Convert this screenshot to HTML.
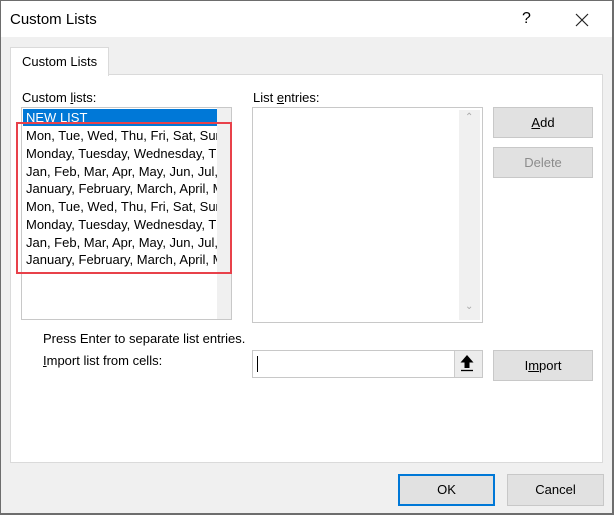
<!DOCTYPE html>
<html><head><meta charset="utf-8"><style>
*{margin:0;padding:0;box-sizing:border-box}
body{width:614px;height:515px;overflow:hidden;background:#6d6d6d;font-family:"Liberation Sans",sans-serif;font-size:13px;color:#000}
.win{position:absolute;left:1px;top:1px;width:611px;height:512px;background:#f0f0f0}
.title{position:absolute;left:0;top:0;width:611px;height:36px;background:#fff}
.abs{position:absolute;white-space:nowrap}
.panel{position:absolute;left:9px;top:73px;width:593px;height:389px;background:#fff;border:1px solid #dadada}
.tab{position:absolute;left:9px;top:46px;width:99px;height:29px;background:#fff;border:1px solid #dadada;border-bottom:none}
.box{position:absolute;background:#fff;border:1px solid #c8c8c8}
.btn{position:absolute;background:#e1e1e1;border:1px solid #c8c8c8;text-align:center;line-height:29px;font-size:13px}
.item{position:absolute;left:25px;font-size:13px;white-space:nowrap;width:191px;overflow:hidden}
</style></head><body>
<div class="win">
<div class="title"></div>
<div class="abs" style="left:9px;top:10px;font-size:15px">Custom Lists</div>
<div class="abs" style="left:521px;top:9px;font-size:16px">?</div>
<svg class="abs" style="left:574px;top:12px" width="14" height="14"><path d="M1 1L13 13M13 1L1 13" stroke="#222" stroke-width="1.2"/></svg>
<div class="panel"></div>
<div class="tab"></div>
<div class="abs" style="left:21px;top:53px">Custom Lists</div>
<div class="abs" style="left:21px;top:89px">Custom <u>l</u>ists:</div>
<div class="abs" style="left:252px;top:89px">List <u>e</u>ntries:</div>
<div class="box" style="left:20px;top:106px;width:211px;height:213px"></div>
<div class="abs" style="left:216px;top:107px;width:14px;height:211px;background:#f0f0f0"></div>
<div class="abs" style="left:22px;top:108px;width:194px;height:17px;background:#0078d7;color:#fff;padding-left:3px;line-height:17px">NEW LIST</div>
<div class="item" style="top:127px">Mon, Tue, Wed, Thu, Fri, Sat, Sun</div>
<div class="item" style="top:145px">Monday, Tuesday, Wednesday, Thursday</div>
<div class="item" style="top:163px">Jan, Feb, Mar, Apr, May, Jun, Jul, Aug</div>
<div class="item" style="top:180px">January, February, March, April, May</div>
<div class="item" style="top:198px">Mon, Tue, Wed, Thu, Fri, Sat, Sun</div>
<div class="item" style="top:216px">Monday, Tuesday, Wednesday, Thursday</div>
<div class="item" style="top:234px">Jan, Feb, Mar, Apr, May, Jun, Jul, Aug</div>
<div class="item" style="top:251px">January, February, March, April, May</div>
<div class="abs" style="left:15px;top:121px;width:216px;height:152px;border:2px solid #e8414a"></div>
<div class="box" style="left:251px;top:106px;width:231px;height:216px"></div>
<div class="abs" style="left:458px;top:109px;width:21px;height:210px;background:#f0f0f0"></div>
<div class="abs" style="left:464px;top:111px;color:#aaa;font-size:10px">&#8963;</div>
<div class="abs" style="left:464px;top:300px;color:#aaa;font-size:10px">&#8964;</div>
<div class="btn" style="left:492px;top:106px;width:100px;height:31px"><u>A</u>dd</div>
<div class="btn" style="left:492px;top:146px;width:100px;height:31px;color:#8c8c8c">Delete</div>
<div class="abs" style="left:42px;top:330px">Press Enter to separate list entries.</div>
<div class="abs" style="left:42px;top:352px"><u>I</u>mport list from cells:</div>
<div class="box" style="left:251px;top:349px;width:231px;height:28px"></div>
<div class="abs" style="left:256px;top:355px;width:1px;height:16px;background:#000"></div>
<div class="abs" style="left:453px;top:350px;width:28px;height:26px;background:#ececec;border-left:1px solid #ccc"></div>
<svg class="abs" style="left:458px;top:353px" width="16" height="18"><path d="M8 1L1.5 8.5H5.5V14H10.5V8.5H14.5Z" fill="#000"/><path d="M2 16.5H14" stroke="#000" stroke-width="1.3"/></svg>
<div class="btn" style="left:492px;top:349px;width:100px;height:31px">I<u>m</u>port</div>
<div class="btn" style="left:397px;top:473px;width:97px;height:32px;border:2px solid #0078d7;line-height:28px">OK</div>
<div class="btn" style="left:506px;top:473px;width:97px;height:32px;line-height:30px">Cancel</div>
</div>
</body></html>
